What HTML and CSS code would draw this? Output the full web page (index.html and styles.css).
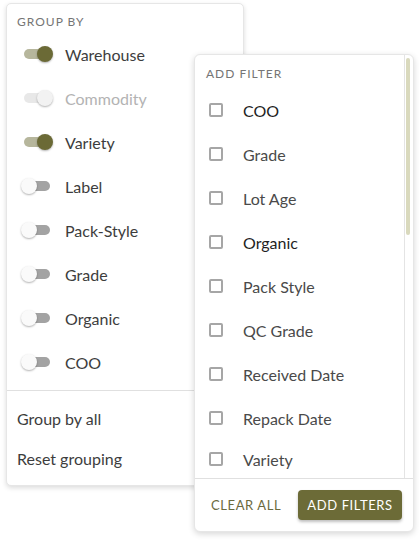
FILE: index.html
```html
<!DOCTYPE html>
<html lang="en">
<head>
    <meta charset="UTF-8">
    <meta name="viewport" content="width=device-width, initial-scale=1.0">
    <title>Group by / Add filter</title>
    <link rel="stylesheet" href="styles.css">
</head>
<body>

<div class="menu-area">
    <div class="group-menu">
        <div class="menu-title">Group by</div>
        <div class="group-list">
            <div class="group-item"><span class="switch on"></span>Warehouse</div>
            <div class="group-item disabled"><span class="switch on"></span>Commodity</div>
            <div class="group-item"><span class="switch on"></span>Variety</div>
            <div class="group-item"><span class="switch"></span>Label</div>
            <div class="group-item"><span class="switch"></span>Pack-Style</div>
            <div class="group-item"><span class="switch"></span>Grade</div>
            <div class="group-item"><span class="switch"></span>Organic</div>
            <div class="group-item"><span class="switch"></span>COO</div>
        </div>
        <div class="group-actions">
            <div class="action-item">Group by all</div>
            <div class="action-item">Reset grouping</div>
        </div>
    </div>

    <div class="filter-menu">
        <div class="filter-body">
            <div class="filter-scroll">
                <div class="menu-title">Add filter</div>
                <div class="filter-item dark"><span class="checkbox"></span>COO</div>
                <div class="filter-item"><span class="checkbox"></span>Grade</div>
                <div class="filter-item"><span class="checkbox"></span>Lot Age</div>
                <div class="filter-item dark"><span class="checkbox"></span>Organic</div>
                <div class="filter-item"><span class="checkbox"></span>Pack Style</div>
                <div class="filter-item"><span class="checkbox"></span>QC Grade</div>
                <div class="filter-item"><span class="checkbox"></span>Received Date</div>
                <div class="filter-item"><span class="checkbox"></span>Repack Date</div>
                <div class="filter-item"><span class="checkbox"></span>Variety</div>
            </div>
            <div class="scroll-track"><div class="scroll-thumb"></div></div>
        </div>
        <div class="filter-footer">
            <button class="text-button">Clear all</button>
            <button class="main-button">Add filters</button>
        </div>
    </div>
</div>

</body>
</html>
```

FILE: styles.css
```css
body {
    font-family: Lato, "Open Sans", sans-serif;
    background-color: #fff;
    color: #3d3d3d;
    margin: 0;
    padding: 0;
}
.menu-area {
    position: relative;
    width: 419px;
    height: 540px;
    padding: 3px 0 0 6px;
    box-sizing: border-box;
}
.group-menu {
    width: 238px;
    background-color: #fff;
    border: 1px solid #e6e6e6;
    border-radius: 5px;
    box-shadow: 0 2px 5px rgba(0, 0, 0, 0.14);
    box-sizing: border-box;
}
.menu-title {
    font-size: 12px;
    line-height: 16px;
    letter-spacing: 1px;
    text-transform: uppercase;
    color: #757575;
    padding: 10px 0 0 10px;
    margin-bottom: 2px;
}
.group-list {
    padding-bottom: 6px;
    border-bottom: 1px solid #e0e0e0;
}
.group-item {
    display: flex;
    align-items: center;
    height: 44px;
    font-size: 16px;
}
.group-item.disabled {
    color: #b3b3b3;
}
.switch {
    position: relative;
    width: 32px;
    height: 16px;
    margin: 0 12px 0 14px;
}
.switch::before {
    content: "";
    position: absolute;
    left: 3px;
    top: 3px;
    width: 26px;
    height: 10px;
    border-radius: 5px;
    background-color: #a3a3a3;
}
.switch::after {
    content: "";
    position: absolute;
    left: 0;
    top: 0;
    width: 16px;
    height: 16px;
    border-radius: 50%;
    background-color: #fafafa;
    box-shadow: 0 1px 2px rgba(0, 0, 0, 0.3);
}
.switch.on::before {
    background-color: #b6b69c;
}
.switch.on::after {
    left: 16px;
    background-color: #6b6a36;
}
.disabled .switch::before {
    background-color: #e8e8e8;
}
.disabled .switch::after {
    background-color: #f2f2f2;
}
.group-actions {
    padding: 8px 0 6px;
}
.action-item {
    height: 40px;
    line-height: 40px;
    padding-left: 10px;
    font-size: 16px;
}
.filter-menu {
    position: absolute;
    left: 194px;
    top: 54px;
    width: 220px;
    height: 478px;
    background-color: #fff;
    border: 1px solid #e6e6e6;
    border-radius: 6px;
    box-shadow: 0 2px 6px rgba(0, 0, 0, 0.16);
    box-sizing: border-box;
    display: flex;
    flex-direction: column;
}
.filter-body {
    display: flex;
    height: 423px;
    flex-shrink: 0;
    border-bottom: 1px solid #e0e0e0;
}
.filter-scroll {
    flex: 1;
    overflow: hidden;
}
.filter-scroll .menu-title {
    padding: 11px 0 0 11px;
    margin-bottom: 6px;
}
.filter-item {
    display: flex;
    align-items: center;
    height: 44px;
    font-size: 16px;
    color: #4a4a4a;
}
.filter-item.dark {
    color: #1f1f1f;
}
.filter-item:last-child {
    height: 38px;
}
.checkbox {
    width: 14px;
    height: 14px;
    border: 2px solid #a6a6a6;
    border-radius: 2px;
    box-sizing: border-box;
    margin: 0 20px 0 14px;
}
.scroll-track {
    width: 6px;
    border-left: 1px solid #e4e4e4;
    padding: 3px 1px 0 1px;
}
.scroll-thumb {
    width: 4px;
    height: 177px;
    border-radius: 2px;
    background-color: #d9d9bd;
}
.filter-footer {
    flex: 1;
    display: flex;
    align-items: center;
    justify-content: space-between;
    padding: 0 11px 0 8px;
}
.text-button, .main-button {
    font-family: Lato, "Open Sans", sans-serif;
    font-size: 13px;
    letter-spacing: 0.6px;
    text-transform: uppercase;
    border: none;
    cursor: pointer;
}
.text-button {
    background: none;
    color: #6b6a3e;
    padding: 6px 8px;
}
.main-button {
    width: 104px;
    height: 30px;
    background-color: #6c6b37;
    color: #fff;
    border-radius: 4px;
    box-shadow: 0 2px 3px rgba(0, 0, 0, 0.25);
}
```
